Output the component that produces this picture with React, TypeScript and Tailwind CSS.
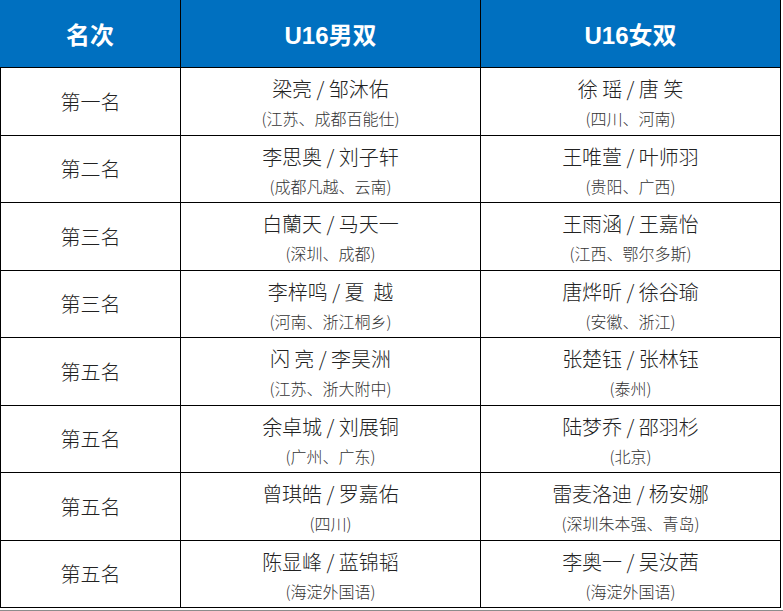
const rows = [
  { rank: "第一名", a: "梁亮 / 邹沐佑", aSub: "(江苏、成都百能仕)", b: "徐 瑶 / 唐 笑", bSub: "(四川、河南)" },
  { rank: "第二名", a: "李思奥 / 刘子轩", aSub: "(成都凡越、云南)", b: "王唯萱 / 叶师羽", bSub: "(贵阳、广西)" },
  { rank: "第三名", a: "白蘭天 / 马天一", aSub: "(深圳、成都)", b: "王雨涵 / 王嘉怡", bSub: "(江西、鄂尔多斯)" },
  { rank: "第三名", a: "李梓鸣 / 夏\u00a0\u00a0越", aSub: "(河南、浙江桐乡)", b: "唐烨昕 / 徐谷瑜", bSub: "(安徽、浙江)" },
  { rank: "第五名", a: "闪 亮 / 李昊洲", aSub: "(江苏、浙大附中)", b: "张楚钰 / 张林钰", bSub: "(泰州)" },
  { rank: "第五名", a: "余卓城 / 刘展铜", aSub: "(广州、广东)", b: "陆梦乔 / 邵羽杉", bSub: "(北京)" },
  { rank: "第五名", a: "曾琪皓 / 罗嘉佑", aSub: "(四川)", b: "雷麦洛迪 / 杨安娜", bSub: "(深圳朱本强、青岛)" },
  { rank: "第五名", a: "陈显峰 / 蓝锦韬", aSub: "(海淀外国语)", b: "李奥一 / 吴汝茜", bSub: "(海淀外国语)" },
];

const bodyFont = { fontFamily: '"Noto Sans CJK SC", "Liberation Sans", sans-serif' };

function Pair({ name, sub }: { name: string; sub: string }) {
  return (
    <div
      className="flex flex-col items-center justify-center border-r border-b border-black bg-white pt-[1px] font-light"
      style={bodyFont}
    >
      <div className="text-[20px] leading-[26px] text-[#222] whitespace-pre">{name}</div>
      <div className="text-[16px] leading-[20px] mt-[6px] text-[#333]">{sub}</div>
    </div>
  );
}

export default function App() {
  return (
    <div
      className="w-[783px] h-[611px] bg-white"
      style={{ fontFamily: '"Liberation Sans", "Noto Sans CJK SC", sans-serif' }}
    >
      <div className="w-[783px] border-b border-[#8c8c8c] pb-[2px] pr-[2px]">
        <div className="grid grid-cols-[181px_300px_300px] grid-rows-[68px_68px_67px_68px_67px_68px_67px_68px_67px]">
          <div className="flex items-center justify-center bg-[#0070c0] border-r border-b border-black text-white font-bold text-[24px] pt-[4px]">
            名次
          </div>
          <div className="flex items-center justify-center bg-[#0070c0] border-r border-b border-black text-white font-bold text-[24px] pt-[4px]">
            U16男双
          </div>
          <div className="flex items-center justify-center bg-[#0070c0] border-r border-b border-black text-white font-bold text-[24px] pt-[4px]">
            U16女双
          </div>
          {rows.map((r, i) => (
            <div key={i} className="contents">
              <div
                className="flex items-center justify-center border-l border-r border-b border-black text-[20px] text-[#222] font-light"
                style={bodyFont}
              >
                {r.rank}
              </div>
              <Pair name={r.a} sub={r.aSub} />
              <Pair name={r.b} sub={r.bSub} />
            </div>
          ))}
        </div>
      </div>
    </div>
  );
}
